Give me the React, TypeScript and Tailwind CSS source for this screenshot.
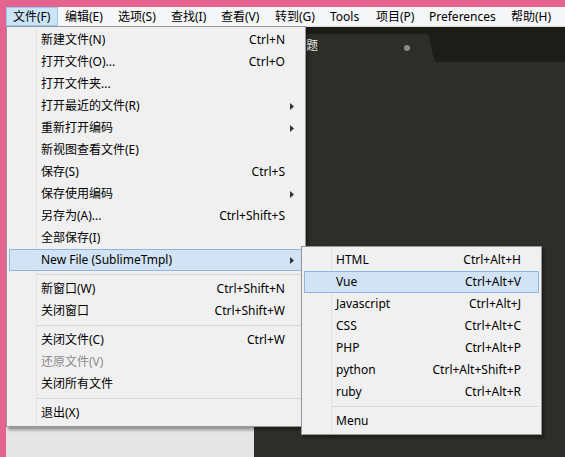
import React from 'react';

type Item =
  | { kind: 'item'; label: string; shortcut?: string; sub?: boolean; disabled?: boolean; active?: boolean }
  | { kind: 'sep' };

const menuBar = [
  { label: '文件(F)', w: 'w-[52px]', open: true },
  { label: '编辑(E)', w: 'w-[53px]' },
  { label: '选项(S)', w: 'w-[53px]' },
  { label: '查找(I)', w: 'w-[50px]' },
  { label: '查看(V)', w: 'w-[54px]' },
  { label: '转到(G)', w: 'w-[55px]' },
  { label: 'Tools', w: 'w-[46px]' },
  { label: '项目(P)', w: 'w-[53px]' },
  { label: 'Preferences', w: 'w-[82px]' },
  { label: '帮助(H)', w: 'w-[54px]' },
];

const fileMenu: Item[] = [
  { kind: 'item', label: '新建文件(N)', shortcut: 'Ctrl+N' },
  { kind: 'item', label: '打开文件(O)...', shortcut: 'Ctrl+O' },
  { kind: 'item', label: '打开文件夹...' },
  { kind: 'item', label: '打开最近的文件(R)', sub: true },
  { kind: 'item', label: '重新打开编码', sub: true },
  { kind: 'item', label: '新视图查看文件(E)' },
  { kind: 'item', label: '保存(S)', shortcut: 'Ctrl+S' },
  { kind: 'item', label: '保存使用编码', sub: true },
  { kind: 'item', label: '另存为(A)...', shortcut: 'Ctrl+Shift+S' },
  { kind: 'item', label: '全部保存(I)' },
  { kind: 'item', label: 'New File (SublimeTmpl)', sub: true, active: true },
  { kind: 'sep' },
  { kind: 'item', label: '新窗口(W)', shortcut: 'Ctrl+Shift+N' },
  { kind: 'item', label: '关闭窗口', shortcut: 'Ctrl+Shift+W' },
  { kind: 'sep' },
  { kind: 'item', label: '关闭文件(C)', shortcut: 'Ctrl+W' },
  { kind: 'item', label: '还原文件(V)', disabled: true },
  { kind: 'item', label: '关闭所有文件' },
  { kind: 'sep' },
  { kind: 'item', label: '退出(X)' },
];

const tmplMenu: Item[] = [
  { kind: 'item', label: 'HTML', shortcut: 'Ctrl+Alt+H' },
  { kind: 'item', label: 'Vue', shortcut: 'Ctrl+Alt+V', active: true },
  { kind: 'item', label: 'Javascript', shortcut: 'Ctrl+Alt+J' },
  { kind: 'item', label: 'CSS', shortcut: 'Ctrl+Alt+C' },
  { kind: 'item', label: 'PHP', shortcut: 'Ctrl+Alt+P' },
  { kind: 'item', label: 'python', shortcut: 'Ctrl+Alt+Shift+P' },
  { kind: 'item', label: 'ruby', shortcut: 'Ctrl+Alt+R' },
  { kind: 'sep' },
  { kind: 'item', label: 'Menu' },
];

const MenuList = ({ items }: { items: Item[] }) => (
  <div className="relative py-[2px]">
    {/* icon column line */}
    <div className="absolute left-[29px] top-0 bottom-0 w-px bg-[#e2e2e2]" />
    {items.map((it, i) =>
      it.kind === 'sep' ? (
        <div key={i} className="h-[7px] flex items-center pl-[30px] pr-[2px]">
          <div className="h-px w-full bg-[#d7d7d7]" />
        </div>
      ) : (
        <div
          key={i}
          className={`relative mx-[2px] h-[22px] flex items-center pl-[31px] pr-[17px] border ${
            it.active ? 'bg-[#d1e3f4] border-[#8db6e3]' : 'border-transparent'
          } ${it.disabled ? 'text-[#8b8b8b]' : 'text-black'}`}
        >
          <span className="flex-1 whitespace-nowrap">{it.label}</span>
          {it.shortcut && <span className="whitespace-nowrap">{it.shortcut}</span>}
          {it.sub && (
            <svg className="absolute right-[8px] top-[7px]" width="4" height="7" viewBox="0 0 4 7">
              <path d="M0 0 L4 3.5 L0 7 Z" fill="#333" />
            </svg>
          )}
        </div>
      )
    )}
  </div>
);

export default function App() {
  return (
    <div
      className="relative w-[565px] h-[457px] overflow-hidden bg-[#e4638f] text-[12px] leading-none"
      style={{ fontFamily: '"Noto Sans", "Noto Sans CJK SC", sans-serif' }}
    >
      <div className="absolute left-[6px] top-[7px] right-0 bottom-0 flex flex-col">
        {/* menu bar */}
        <div className="h-[20px] flex bg-[#f5f6f7] border-b border-[#d9d9d9]">
          {menuBar.map((m) => (
            <div
              key={m.label}
              className={`${m.w} h-[19px] flex items-center pl-[6px] border whitespace-nowrap text-black ${
                m.open ? 'bg-[#cce4f7] border-[#99c9ef]' : 'border-transparent'
              }`}
            >
              {m.label}
            </div>
          ))}
        </div>
        {/* window body */}
        <div className="flex-1 flex">
          <div className="w-[248px] bg-[#e5e5e5]" />
          <div className="flex-1 flex flex-col bg-[#272822]">
            <div className="h-[35px] bg-[#1c1c18] flex items-end">
              <div className="h-[28px] w-[166px] bg-[#2d2e29] rounded-tl-[6px] relative">
                <span className="absolute left-[28px] top-[6px] text-[#e6e6e6] text-[12px]">无标题</span>
                <div className="absolute left-[150px] top-[11px] w-[6px] h-[6px] rounded-full bg-[#8b8b86]" />
              </div>
              <svg width="18" height="28" viewBox="0 0 18 28" className="block">
                <path d="M0 0 L4 0 C8 0 9 2 10 6 L13 22 C14 26 15 28 18 28 L0 28 Z" fill="#2d2e29" />
              </svg>
            </div>
            <div className="flex-1 bg-[#2d2e29]" />
          </div>
        </div>
      </div>

      {/* File menu */}
      <div className="absolute left-[6px] top-[26px] w-[300px] bg-[#f0f0f0] border border-[#979797] shadow-[2px_3px_3px_rgba(0,0,0,0.35)]">
        <MenuList items={fileMenu} />
      </div>

      {/* SublimeTmpl submenu */}
      <div className="absolute left-[301px] top-[246px] w-[241px] bg-[#f0f0f0] border border-[#979797] shadow-[2px_3px_3px_rgba(0,0,0,0.35)]">
        <MenuList items={tmplMenu} />
      </div>
    </div>
  );
}
